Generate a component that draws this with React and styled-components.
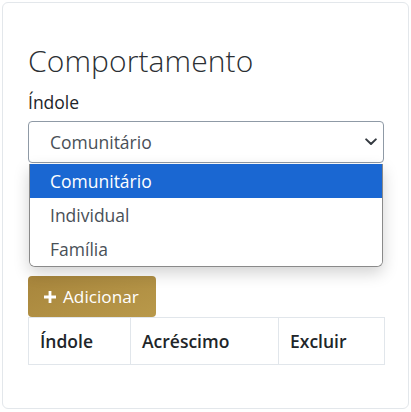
import React from "react";
import styled, { createGlobalStyle } from "styled-components";

const GlobalStyle = createGlobalStyle`
  body {
    margin: 0;
    padding: 2px;
    background: #ffffff;
    font-family: "Open Sans", "Liberation Sans", sans-serif;
    color: #212529;
  }
`;

const OPTIONS = ["Comunitário", "Individual", "Família"];
const COLUMNS = [
  { label: "Índole", width: 102 },
  { label: "Acréscimo", width: 148 },
  { label: "Excluir", width: 106 },
];

const App = () => {
  return (
    <>
      <GlobalStyle />
      <Card>
        <Title>Comportamento</Title>
        <Label>Índole</Label>
        <SelectWrapper>
          <SelectBox>
            <span>{OPTIONS[0]}</span>
            <Chevron viewBox="0 0 12 8">
              <path
                d="M1.2 1.4L6 6l4.8-4.6"
                fill="none"
                stroke="currentColor"
                strokeWidth="2"
                strokeLinecap="round"
                strokeLinejoin="round"
              />
            </Chevron>
          </SelectBox>
          <Menu>
            {OPTIONS.map((option, i) => (
              <Option key={option} selected={i === 0}>
                {option}
              </Option>
            ))}
          </Menu>
        </SelectWrapper>
        <AddButton>
          <PlusIcon viewBox="0 0 12 12">
            <path d="M4.6 0h2.8v4.6H12v2.8H7.4V12H4.6V7.4H0V4.6h4.6z" fill="currentColor" />
          </PlusIcon>
          Adicionar
        </AddButton>
        <Table>
          <thead>
            <tr>
              {COLUMNS.map((col) => (
                <Th key={col.label} style={{ width: col.width }}>
                  {col.label}
                </Th>
              ))}
            </tr>
          </thead>
        </Table>
      </Card>
    </>
  );
};

const Card = styled.div`
  box-sizing: border-box;
  width: 407px;
  height: 407px;
  border: 1px solid #e3e7eb;
  border-radius: 6px;
  padding: 40px 24px 0 25px;
  display: flex;
  flex-direction: column;
`;

const Title = styled.h3`
  margin: 0 0 10px;
  font-size: 30px;
  font-weight: 300;
  line-height: 36px;
  color: #2b2f33;
  letter-spacing: 0.1px;
`;

const Label = styled.label`
  display: block;
  font-size: 17.5px;
  line-height: 26px;
  color: #212529;
  margin-bottom: 6px;
`;

const SelectWrapper = styled.div`
  position: relative;
  margin-bottom: 113px;
`;

const SelectBox = styled.div`
  box-sizing: border-box;
  height: 42px;
  border: 1px solid #8f9aa6;
  border-radius: 4px;
  padding: 0 6px 0 21px;
  display: flex;
  align-items: center;
  justify-content: space-between;
  font-size: 17.5px;
  color: #495057;
`;

const Chevron = styled.svg`
  width: 12px;
  height: 8px;
  color: #343a40;
`;

const Menu = styled.ul`
  position: absolute;
  top: 43px;
  left: 1px;
  right: 1px;
  margin: 0;
  padding: 0;
  list-style: none;
  background: #ffffff;
  border: 1px solid #8a8a8a;
  border-top: none;
  border-radius: 0 0 6px 6px;
  overflow: hidden;
  box-shadow: 0 6px 16px rgba(0, 0, 0, 0.18);
`;

const Option = styled.li`
  height: 34px;
  display: flex;
  align-items: center;
  padding-left: 20px;
  font-size: 17.5px;
  background: ${(p) => (p.selected ? "#1a67d2" : "#ffffff")};
  color: ${(p) => (p.selected ? "#ffffff" : "#495057")};
`;

const AddButton = styled.button`
  align-self: flex-start;
  display: flex;
  align-items: center;
  gap: 7px;
  height: 41px;
  padding: 0 17px 0 16px;
  border: none;
  border-radius: 4px;
  background: linear-gradient(160deg, #a7853c 0%, #b9994a 100%);
  color: #ffffff;
  font-family: "Open Sans", "Liberation Sans", sans-serif;
  font-size: 17.2px;
  cursor: pointer;
`;

const PlusIcon = styled.svg`
  width: 12px;
  height: 12px;
`;

const Table = styled.table`
  width: 357px;
  border-collapse: collapse;
`;

const Th = styled.th`
  box-sizing: border-box;
  height: 47px;
  padding: 0 11px;
  border: 1px solid #e1e6eb;
  text-align: left;
  font-size: 17.5px;
  font-weight: 600;
  color: #212529;
`;

export default App;
